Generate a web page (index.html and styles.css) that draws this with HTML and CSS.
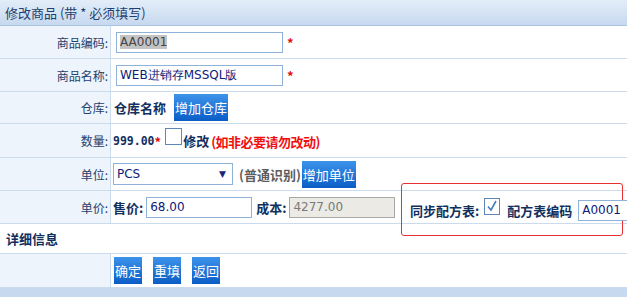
FILE: index.html
```html
<!DOCTYPE html>
<html>
<head>
<meta charset="utf-8">
<link rel="stylesheet" href="styles.css">
</head>
<body>
<div class="page">
  <div class="title">修改商品 (带 * 必须填写)</div>
  <table class="form">
    <tr class="r1">
      <td class="lbl">商品编码:</td>
      <td class="val"><span class="inp w166"><span class="sel">AA0001</span></span><span class="req">*</span></td>
    </tr>
    <tr class="r2">
      <td class="lbl">商品名称:</td>
      <td class="val"><span class="inp w166">WEB进销存MSSQL版</span><span class="req">*</span></td>
    </tr>
    <tr class="r3">
      <td class="lbl">仓库:</td>
      <td class="val"><b class="bt">仓库名称</b><span class="btn b-wh">增加仓库</span></td>
    </tr>
    <tr class="r4">
      <td class="lbl">数量:</td>
      <td class="val"><b class="num">999.00</b><span class="req">*</span><span class="chk"></span><b class="bt">修改</b><b class="warn">(如非必要请勿改动)</b></td>
    </tr>
    <tr class="r5">
      <td class="lbl">单位:</td>
      <td class="val"><span class="select">PCS<span class="arrow">▼</span></span><b class="grey">(普通识别)</b><span class="btn b-unit">增加单位</span></td>
    </tr>
    <tr class="r6">
      <td class="lbl">单价:</td>
      <td class="val">
        <div class="pricewrap">
          <b class="bt">售价:</b><span class="inp w106">68.00</span><b class="bt cost">成本:</b><span class="inp w106 dis">4277.00</span>
          <div class="sync">
            <b class="bt">同步配方表:</b><span class="chk on"><svg width="14" height="14" viewBox="0 0 14 14"><path d="M3 7.5 L6 11 L11 2" fill="none" stroke="#4a7fc0" stroke-width="1.6"/></svg></span><b class="bt code">配方表编码</b><span class="inp w80">A0001</span>
          </div>
        </div>
      </td>
    </tr>
    <tr class="r7">
      <td class="detail" colspan="2"><b class="bt">详细信息</b></td>
    </tr>
    <tr class="r8">
      <td class="lbl"></td>
      <td class="val"><span class="btn b-ok">确定</span><span class="btn b-ok">重填</span><span class="btn b-ok">返回</span></td>
    </tr>
  </table>
  <div class="foot"></div>
</div>
</body>
</html>
```
FILE: styles.css
```css
html, body {
  margin: 0;
  padding: 0;
  background: #fff;
  overflow: hidden;
}
body {
  font-family: "Noto Sans CJK SC", "DejaVu Sans", sans-serif;
  font-size: 12px;
  color: #1e3a68;
}
.page {
  width: 700px;
}
.title {
  height: 25px;
  line-height: 25px;
  padding-left: 5px;
  font-size: 13px;
  color: #1f3f70;
  background: linear-gradient(#e3edf8, #c7d9ef);
  border-bottom: 1px solid #a9c4df;
}
.form {
  width: 100%;
  border-collapse: collapse;
}
.form td {
  padding: 0;
  border-bottom: 1px solid #c9dbec;
  vertical-align: middle;
}
.r1 td, .r2 td { height: 32px; }
.r3 td { height: 31px; }
.r4 td { height: 33px; }
.r5 td { height: 32px; }
.r6 td { height: 32px; }
.r7 td { height: 29px; }
.r8 td { height: 33px; }
.lbl {
  width: 108px;
  padding-right: 2px !important;
  text-align: right;
  background: #eef4fb;
  border-right: 1px solid #cddcec;
  font-size: 12px;
  color: #24406b;
}
.val {
  padding-left: 2px !important;
  white-space: nowrap;
}
.inp {
  display: inline-block;
  vertical-align: middle;
  box-sizing: border-box;
  height: 21px;
  line-height: 19px;
  border: 1px solid #8fb2da;
  padding-left: 3px;
  font-family: "DejaVu Sans", sans-serif;
  font-size: 12px;
  color: #0c1a7a;
  background: #fff;
  overflow: hidden;
}
.w166 { width: 167px; margin-left: 3px; }
.w106 { width: 106px; }
.w80 { width: 80px; }
.dis {
  background: #ebeae4;
  border-color: #a8a8a8;
  color: #7a7a7a;
}
.sel {
  background: #c3c3c3;
  color: #444;
}
.req {
  color: #e01010;
  font-weight: bold;
  font-size: 13px;
  margin-left: 4px;
  vertical-align: middle;
}
.bt {
  font-size: 13px;
  color: #12305e;
  vertical-align: middle;
}
.r3 .bt { margin-left: 1px; margin-right: 8px; }
.num {
  font-family: "DejaVu Sans Mono", monospace;
  font-size: 11.5px;
  color: #12305e;
  vertical-align: middle;
}
.r4 .req { margin-left: 0; margin-right: 4px; }
.warn {
  color: #f01010;
  font-size: 13px;
  margin-left: 2px;
  letter-spacing: -0.5px;
  vertical-align: middle;
}
.grey {
  color: #5d5d5d;
  font-size: 13px;
  margin-left: 6px;
  vertical-align: middle;
}
.chk {
  display: inline-block;
  box-sizing: border-box;
  width: 17px;
  height: 17px;
  border: 1px solid #5e86b8;
  background: #fff;
  vertical-align: middle;
  position: relative;
  top: -5px;
  margin-right: 1px;
}
.chk svg { display: block; }
.btn {
  display: inline-block;
  vertical-align: middle;
  height: 27px;
  line-height: 27px;
  padding: 0 1px;
  color: #fff;
  font-size: 13px;
  background: linear-gradient(#3d93ea, #0a5dc6);
}
.b-unit { margin-left: 1px; }
.r8 .val { padding-left: 3px !important; }
.b-ok { margin-right: 11px; }
.select {
  display: inline-block;
  vertical-align: middle;
  box-sizing: border-box;
  width: 120px;
  height: 22px;
  line-height: 20px;
  border: 1px solid #8fb2da;
  padding-left: 3px;
  font-family: "DejaVu Sans", sans-serif;
  font-size: 12px;
  color: #0c1a7a;
  position: relative;
}
.arrow {
  position: absolute;
  right: 6px;
  top: 0;
  font-size: 9px;
  color: #1a237e;
}
.pricewrap {
  position: relative;
  height: 32px;
  display: flex;
  align-items: center;
  gap: 3px;
}
.cost { margin-left: 1px; }
.sync {
  position: absolute;
  left: 288px;
  top: -8px;
  width: 222px;
  height: 53px;
  box-sizing: border-box;
  border: 1px solid #e83030;
  border-radius: 3px;
  display: flex;
  align-items: center;
  padding-left: 8px;
  padding-top: 2px;
}
.sync .chk { margin-left: 5px; top: -4px; margin-right: 7px; }
.sync .code { margin-right: 6px; }
.sync .inp { flex: none; width: 90px; }
.detail {
  padding-left: 6px !important;
}
.foot {
  height: 10px;
  background: #c7d9ee;
}
```
